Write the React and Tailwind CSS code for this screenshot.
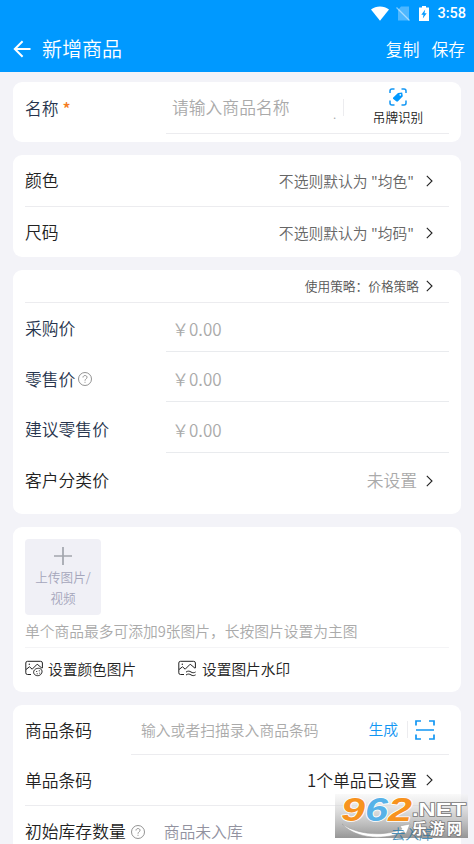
import React from 'react'

const Chevron = () => (
  <svg className="w-[7px] h-[12px] shrink-0" viewBox="0 0 7 12" fill="none" stroke="#222" strokeWidth="1.1">
    <path d="M0.8 0.8 L6 6 L0.8 11.2" />
  </svg>
)

const Help = () => (
  <svg className="w-[14px] h-[14px] shrink-0" viewBox="0 0 14 14" fill="none" stroke="#777" strokeWidth="0.8">
    <circle cx="7" cy="7" r="6.5" />
    <path d="M5 5.5 C5 2.9 9 2.9 9 5.3 C9 6.8 7 6.9 7 8.7" />
    <path d="M7 9.8 V10.8" />
  </svg>
)

const PictureIcon = ({ type }) => (
  <svg className="w-[19px] h-[17px] mb-[2px] shrink-0" viewBox="0 0 19 17" fill="none" stroke="#222" strokeWidth="1">
    <path d="M6 14.5 H2.5 Q0.8 14.5 0.8 12.8 V3 Q0.8 1.3 2.5 1.3 H15.5 Q17.4 1.3 17.4 3 V8" />
    <path d="M1 9.5 L4.5 6.8 L7.2 9.2 L12.2 4.2 L17.2 8.4" />
    <circle cx="4.3" cy="4.2" r="0.7" fill="#222" stroke="none" />
    {type === 'color' ? (
      <>
        <path d="M12.4 8.4 C15.6 7.6 17.8 10.3 16.8 12.8 C15.8 15.8 12 16.6 9.7 14.6 C7.3 12.3 9.2 8.8 12.4 8.4 Z" />
        <path d="M11.2 11.5 H12.2 M13.8 10.8 H14.8 M11.7 13.8 H12.7 M14.3 13.2 H15.2" />
      </>
    ) : (
      <>
        <path d="M8 12.1 C10 10.7 11.5 11 13 12 C14.6 13 16 12.9 17.6 12" />
        <path d="M8 15 C10 13.6 11.5 13.9 13 14.9 C14.6 15.9 16 15.8 17.6 14.9" />
      </>
    )}
  </svg>
)

const Card = ({ children, className = '' }) => (
  <section className={`bg-white rounded-[9px] px-[12px] ${className}`}>{children}</section>
)

const prices = [
  { label: '采购价', row: 'h-[49px]', pad: 'pt-[2px]' },
  { label: '零售价', row: 'h-[50px]', pad: 'pt-[4px]', help: true },
  { label: '建议零售价', row: 'h-[51px]', pad: 'pt-[4px]' },
]

const StatusBar = () => (
  <div className="h-[26px] flex items-center justify-end pr-[8px]">
    <svg className="w-[18px] h-[15px] mr-[7px]" viewBox="0 0 18 15" fill="#fff">
      <path d="M0 3.6 C5 -0.6 13 -0.6 18 3.6 L9 14.8 Z" />
    </svg>
    <svg className="w-[14px] h-[15px] mr-[9px]" viewBox="0 0 14 15">
      <path d="M5 0.5 H13 V14.5 H2 V4 Z" fill="#fff" opacity="0.3" />
      <path d="M0.5 1.5 L13.5 14.5" stroke="#fff" strokeWidth="1.2" opacity="0.5" />
    </svg>
    <svg className="w-[10px] h-[15px] mr-[8px]" viewBox="0 0 10 15">
      <path d="M3 0 H7 V1.5 H10 V15 H0 V1.5 H3 Z" fill="#fff" />
      <path d="M6.2 3.5 L2.3 8.7 H4.5 L3.8 12.5 L7.7 7.3 H5.5 Z" fill="#0099ff" />
    </svg>
    <span className="font-[Roboto] font-medium text-[14.5px] leading-none pt-[2px]">3:58</span>
  </div>
)

const Watermark = () => (
  <svg className="absolute left-[335px] top-[784px] w-[133px] h-[60px]" viewBox="0 -10 133 60">
    <defs>
      <linearGradient id="plate" x1="0" y1="0" x2="0" y2="1">
        <stop offset="0" stopColor="#f4f4f4" stopOpacity="0.5" />
        <stop offset="1" stopColor="#7c7c7c" stopOpacity="0.8" />
      </linearGradient>
    </defs>
    <rect width="133" height="44" fill="url(#plate)" />
    <g fontFamily="Liberation Sans" fontWeight="bold" fontStyle="italic" fontSize="33" stroke="#fff" strokeWidth="1.6" paintOrder="stroke" strokeLinejoin="round">
      <text x="6" y="27" textLength="24" lengthAdjust="spacingAndGlyphs" fill="#f7931e">9</text>
      <text x="30" y="27" textLength="23" lengthAdjust="spacingAndGlyphs" fill="#58b2e8">6</text>
      <text x="53" y="27" textLength="24" lengthAdjust="spacingAndGlyphs" fill="#f7931e">2</text>
    </g>
    <path d="M7 30 C24 42 52 42 67 35 L65 32 L75 30 L71 40 L69 37.5 C52 46 22 46 7 30 Z" fill="#fff" stroke="#999" strokeWidth="0.5" />
    <text x="56" y="45" fontFamily="Noto Sans CJK SC" fontSize="14.2" textLength="42" fill="#2577a8" opacity="0.8">去入库</text>
    <g fill="#fff" stroke="#777" strokeWidth="1.5" paintOrder="stroke" fontWeight="bold">
      <text x="77" y="22" fontFamily="Liberation Sans" fontSize="19" textLength="54" lengthAdjust="spacingAndGlyphs">.NET</text>
      <text x="77" y="40" fontFamily="Noto Sans CJK SC" fontSize="15" textLength="50">乐游网</text>
    </g>
  </svg>
)

const App = () => {
  return (
    <div className="relative w-[474px] h-[844px] overflow-hidden bg-[#f3f3f8] font-['Noto_Sans_CJK_SC',sans-serif] font-[350] text-[16.8px] leading-none text-[#222] whitespace-nowrap">
      <header className="h-[72px] bg-[#0099ff] text-white">
        <StatusBar />
        <div className="h-[46px] flex items-center pl-[13px] pr-[9px]">
          <svg className="w-[18px] h-[18px]" viewBox="0 0 18 18" fill="none" stroke="#fff" strokeWidth="2">
            <path d="M17.5 9 H1.8 M9.6 1.2 L1.8 9 L9.6 16.8" />
          </svg>
          <h1 className="ml-[11px] text-[20px]">新增商品</h1>
          <span className="ml-auto">复制</span>
          <span className="ml-[12px]">保存</span>
        </div>
      </header>

      <main className="px-[13px] pt-[10px] flex flex-col gap-[13px]">
        <Card className="h-[60px]">
          <div className="flex h-[52px]">
            <div className="w-[141px] shrink-0 flex items-center text-[#27344d]">
              名称<span className="ml-[4px] text-[#f47b20] font-medium">*</span>
            </div>
            <div className="flex-1 min-w-0 flex items-center border-b border-[#ececef] pl-[6px]">
              <span className="text-[#aaa] w-[161px] shrink-0">请输入商品名称</span>
              <span className="text-[#aaa] w-[10px] shrink-0 pt-[12px] text-[12px]">.</span>
              <span className="h-[17px] border-l border-[#ececef]" />
              <div className="flex-1 flex flex-col items-center gap-[5px] pb-[3px] pl-[3px] text-[12.6px]">
                <svg className="w-[18px] h-[18px]" viewBox="0 0 18 18" fill="none" stroke="#1296f3" strokeWidth="1.5">
                  <path d="M1 5 V3 Q1 1 3 1 H5.5 M12.5 1 H15 Q17 1 17 3 V5 M17 12.5 V15 Q17 17 15 17 H12.5 M5.5 17 H3 Q1 17 1 15 V12.5" />
                  <path d="M4 9.8 L9 5.1 L13.2 4.4 L13.8 8.3 L9 13.3 Q8 14 7.2 13.2 L4 10.8 Z" fill="#0099ff" stroke="none" />
                  <circle cx="11.3" cy="6.8" r="0.9" fill="#fff" stroke="none" />
                </svg>
                吊牌识别
              </div>
            </div>
          </div>
        </Card>

        <Card className="h-[102px]">
          <div className="h-[52px] border-b border-[#ececef] pr-[16px] flex items-center">
            颜色
            <span className="ml-auto mr-[12px] pt-[1px] text-[14.8px] text-[#666]">不选则默认为 "均色"</span>
            <Chevron />
          </div>
          <div className="h-[51px] pr-[16px] flex items-center">
            尺码
            <span className="ml-auto mr-[12px] pt-[1px] text-[14.8px] text-[#666]">不选则默认为 "均码"</span>
            <Chevron />
          </div>
        </Card>

        <Card className="h-[244px]">
          <div className="h-[33px] border-b border-[#ececef] pr-[16px] flex items-center justify-end text-[12.7px] text-[#555]">
            <span className="mr-[7px]">使用策略：价格策略</span>
            <Chevron />
          </div>
          {prices.map((item) => (
            <div key={item.label} className={`flex ${item.row}`}>
              <div className={`w-[141px] shrink-0 flex items-center gap-[3px] text-[#27344d] ${item.pad}`}>
                {item.label}
                {item.help && <Help />}
              </div>
              <div className={`flex-1 flex items-center border-b border-[#e9ebee] pl-[6px] text-[17px] text-[#aaa] ${item.pad}`}>￥0.00</div>
            </div>
          ))}
          <div className="h-[55px] pr-[16px] flex items-center">
            客户分类价
            <span className="ml-auto mr-[9px] text-[#aaa]">未设置</span>
            <Chevron />
          </div>
        </Card>

        <Card className="h-[165px] pt-[12px]">
          <div className="w-[76px] h-[76px] rounded-[4px] bg-[#f0f0f6] flex flex-col items-center pt-[7px] text-[12.6px] leading-[21px] text-[#a5a6bb]">
            <svg className="w-[20px] h-[20px]" viewBox="0 0 20 20" stroke="#a2a5ad" strokeWidth="1.7">
              <path d="M1 10 H19 M10 1 V19" />
            </svg>
            <span>上传图片/</span>
            <span>视频</span>
          </div>
          <div className="h-[33px] border-b border-[#f4f4f6] flex items-center text-[14.75px] text-[#aaa]">
            单个商品最多可添加9张图片，长按图片设置为主图
          </div>
          <div className="h-[43px] flex items-center text-[14.7px]">
            <PictureIcon type="color" />
            <span className="ml-[4px] w-[130px]">设置颜色图片</span>
            <PictureIcon type="water" />
            <span className="ml-[5px]">设置图片水印</span>
          </div>
        </Card>

        <Card className="h-[160px]">
          <div className="flex h-[50px]">
            <div className="w-[106px] shrink-0 flex items-center">商品条码</div>
            <div className="flex-1 flex items-center border-b border-[#ececef] pl-[10px] text-[14.8px]">
              <span className="text-[#aaa] pt-[2px]">输入或者扫描录入商品条码</span>
              <span className="ml-auto mr-[9px] text-[#1296f3]">生成</span>
              <span className="h-[17px] border-l border-[#ececef] mr-[7px]" />
              <svg className="w-[20px] h-[20px] mr-[14px] mt-[1px]" viewBox="0 0 20 20" fill="none" stroke="#1296f3" strokeWidth="1.7">
                <path d="M1 5.5 V1 H6 M14 1 H19 V5.5 M19 14.5 V19 H14 M6 19 H1 V14.5 M1 10 H19" />
              </svg>
            </div>
          </div>
          <div className="h-[51px] border-b border-[#ececef] pr-[16px] flex items-center">
            单品条码
            <span className="ml-auto mr-[9px]">1个单品已设置</span>
            <Chevron />
          </div>
          <div className="h-[51px] flex items-center">
            初始库存数量
            <span className="ml-[5px]"><Help /></span>
            <span className="ml-[19px] text-[15.8px] text-[#92929f]">商品未入库</span>
          </div>
        </Card>
      </main>

      <Watermark />
    </div>
  )
}

export default App
